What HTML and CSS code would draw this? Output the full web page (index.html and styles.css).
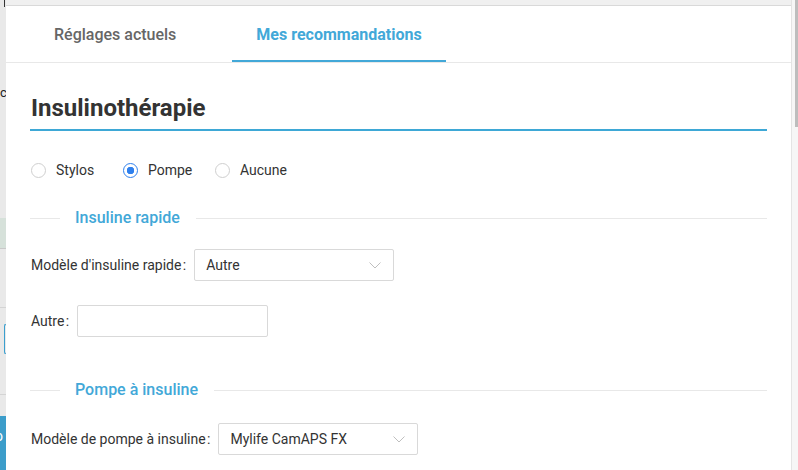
FILE: index.html
```html
<!DOCTYPE html>
<html lang="fr">
<head>
    <meta charset="UTF-8">
    <meta name="viewport" content="width=device-width, initial-scale=1.0">
    <title>Mes recommandations</title>
    <link rel="stylesheet" href="styles.css">
</head>
<body>

    <!-- bit of the page behind the drawer -->
    <div class="page-edge">
        <div class="edge-caret"></div>
        <div class="edge-text">ec</div>
        <div class="edge-card"></div>
        <div class="edge-rule edge-rule-1"></div>
        <div class="edge-input"></div>
        <div class="edge-rule edge-rule-2"></div>
        <div class="edge-button">o</div>
    </div>

    <div class="main">
        <div class="topbar"></div>

        <div class="drawer">
            <div class="tabs">
                <div class="tab">Réglages actuels</div>
                <div class="tab active">Mes recommandations</div>
            </div>

            <div class="content">
                <h1>Insulinothérapie</h1>

                <div class="radios">
                    <label class="radio"><span class="dot"></span>Stylos</label>
                    <label class="radio checked"><span class="dot"></span>Pompe</label>
                    <label class="radio"><span class="dot"></span>Aucune</label>
                </div>

                <div class="divider first">Insuline rapide</div>

                <div class="field">
                    <span class="label">Modèle d'insuline rapide&#8202;:</span>
                    <div class="select">
                        <span>Autre</span>
                        <svg class="chevron" width="12" height="7" viewBox="0 0 12 7"><path d="M0.5 0.5 L6 6 L11.5 0.5" fill="none" stroke="#bfbfbf" stroke-width="1"/></svg>
                    </div>
                </div>

                <div class="field other">
                    <span class="label">Autre&#8202;:</span>
                    <div class="input"></div>
                </div>

                <div class="divider second">Pompe à insuline</div>

                <div class="field pump">
                    <span class="label">Modèle de pompe à insuline&#8202;:</span>
                    <div class="select">
                        <span>Mylife CamAPS FX</span>
                        <svg class="chevron" width="12" height="7" viewBox="0 0 12 7"><path d="M0.5 0.5 L6 6 L11.5 0.5" fill="none" stroke="#bfbfbf" stroke-width="1"/></svg>
                    </div>
                </div>
            </div>
        </div>
    </div>

    <div class="scrollbar"><div class="thumb"></div></div>

</body>
</html>
```

FILE: styles.css
```css
body {
    font-family: Roboto, "Noto Sans", Arial, sans-serif;
    margin: 0;
    padding: 0;
    width: 798px;
    height: 470px;
    overflow: hidden;
    display: flex;
    background-color: #fff;
    color: #333;
}

/* left strip of the page under the drawer */
.page-edge {
    width: 6px;
    flex-shrink: 0;
    background-color: #e9e9e9;
    display: flex;
    flex-direction: column;
    overflow: hidden;
}
.edge-caret {
    width: 1px;
    height: 7px;
    margin-left: 4px;
    background-color: #333;
}
.edge-text {
    margin-top: 79px;
    margin-left: -7px;
    font-size: 13px;
    line-height: 14px;
    color: #222;
}
.edge-card {
    margin-top: 118px;
    height: 30px;
    background-color: #d6e1da;
    border-bottom: 1px solid #c9c9c9;
}
.edge-rule {
    height: 1px;
    background-color: #d4d4d4;
}
.edge-rule-1 {
    margin-top: 58px;
}
.edge-input {
    margin-top: 16px;
    margin-left: 4px;
    height: 28px;
    border: 1px solid #3a9fcf;
    border-right: none;
    border-radius: 3px 0 0 3px;
}
.edge-rule-2 {
    margin-top: 40px;
}
.edge-button {
    margin-top: 21px;
    flex: 1;
    background-color: #3c9dca;
    color: #fff;
    font-size: 14px;
    line-height: 40px;
    text-indent: -5px;
}

.main {
    flex: 1;
    display: flex;
    flex-direction: column;
    min-width: 0;
}
.topbar {
    height: 5px;
    background-color: #f0f0f0;
    border-bottom: 1px solid #d9d9d9;
}

.drawer {
    flex: 1;
    background-color: #fff;
}

.tabs {
    display: flex;
    gap: 32px;
    padding-left: 24px;
    border-bottom: 1px solid #e8e8e8;
}
.tab {
    height: 54px;
    line-height: 57px;
    padding: 0 24px;
    font-size: 16px;
    font-weight: 500;
    color: #666;
    border-bottom: 2px solid transparent;
}
.tab.active {
    color: #42a8d8;
    font-weight: 700;
    border-bottom-color: #42a8d8;
}

.content {
    padding: 0 24px;
}

h1 {
    margin: 29px 0 0;
    padding: 0 0 5px 1px;
    font-size: 24px;
    line-height: 32px;
    font-weight: 700;
    color: #333;
    border-bottom: 2px solid #3ea8d6;
}

.radios {
    display: flex;
    margin-top: 28px;
    padding-left: 1px;
}
.radio {
    width: 92px;
    display: flex;
    align-items: center;
    gap: 10px;
    font-size: 14px;
    line-height: 22px;
    color: #333;
}
.dot {
    width: 15px;
    height: 15px;
    box-sizing: border-box;
    border: 1px solid #cfcfcf;
    border-radius: 50%;
    background-color: #fff;
}
.radio.checked .dot {
    border-color: #2f80ed;
    background: radial-gradient(circle, #2f80ed 0 3.5px, #fff 4px);
}

.divider {
    display: flex;
    align-items: center;
    font-size: 16px;
    font-weight: 500;
    line-height: 22px;
    color: #42a8d8;
}
.divider::before,
.divider::after {
    content: "";
    height: 1px;
    background-color: #e8e8e8;
}
.divider::before {
    width: 30px;
    margin-right: 15px;
}
.divider::after {
    flex: 1;
    margin-left: 16px;
}
.divider.first {
    margin-top: 26px;
}
.divider.second {
    margin-top: 42px;
}

.field {
    display: flex;
    align-items: center;
    gap: 8px;
    margin-top: 20px;
    padding-left: 1px;
    font-size: 14px;
}
.field.other {
    margin-top: 24px;
}
.field.pump {
    margin-top: 22px;
}
.label {
    color: #333;
}
.select,
.input {
    height: 32px;
    box-sizing: border-box;
    border: 1px solid #d9d9d9;
    border-radius: 2px;
    background-color: #fff;
}
.select {
    width: 200px;
    display: flex;
    align-items: center;
    justify-content: space-between;
    padding: 0 12px 0 11px;
    color: #333;
}
.input {
    width: 191px;
}
.chevron {
    display: block;
}

.scrollbar {
    width: 6px;
    flex-shrink: 0;
    border-left: 1px solid #e4e4e4;
    background-color: #f6f6f6;
    display: flex;
    justify-content: flex-end;
}
.thumb {
    width: 3px;
    height: 127px;
    background-color: #bdbdbd;
}
```
